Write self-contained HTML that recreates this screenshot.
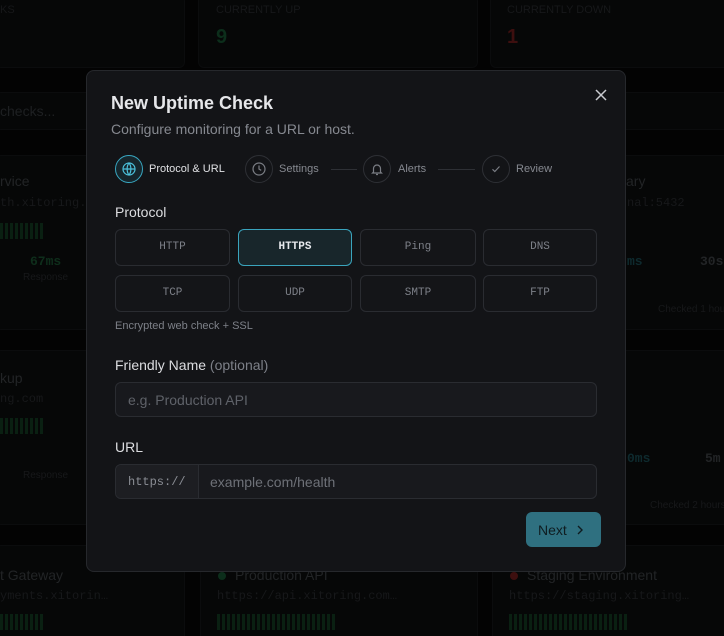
<!DOCTYPE html>
<html><head><style>
*{box-sizing:border-box;margin:0;padding:0}
html,body{width:724px;height:636px;overflow:hidden}
body{background:#030303;font-family:"Liberation Sans",sans-serif;position:relative}
.bg{position:absolute;background:#060707;border:1px solid #0b0c0d;border-radius:6px}
.t{position:absolute;white-space:nowrap}
.m{font-family:"Liberation Mono",monospace}
.bars{position:absolute;height:16px;background:repeating-linear-gradient(90deg,#0a2012 0 3px,transparent 3px 5px)}
.modal{position:absolute;left:86px;top:70px;width:540px;height:502px;background:#131417;border:1px solid #26282c;border-radius:8px}
.step{position:absolute;top:155px;width:28px;height:28px;border:1px solid #2e3035;border-radius:50%}
.step svg{position:absolute;left:5px;top:5px}
.lbl{position:absolute;top:163px;font-size:11px;color:#868990}
.line{position:absolute;top:169px;height:1px;background:#2e3035}
.pb{position:absolute;height:37px;border:1px solid #2a2c31;border-radius:6px;background:#141518;color:#7d8088;font-family:"Liberation Mono",monospace;font-size:11px;text-align:center;line-height:35px}
.in{position:absolute;left:115px;width:482px;height:35px;border:1px solid #2a2c31;border-radius:6px;background:#18191d}
</style></head><body>
<div class="bg" style="left:-5px;top:-5px;width:190px;height:73px"></div>
<div class="bg" style="left:198px;top:-5px;width:280px;height:73px"></div>
<div class="bg" style="left:490px;top:-5px;width:240px;height:73px"></div>
<div class="t" style="left:0;top:4px;font-size:11px;color:#17181a">KS</div>
<div class="t" style="left:216px;top:4px;font-size:11px;color:#17181a">CURRENTLY UP</div>
<div class="t" style="left:216px;top:26px;font-size:20px;color:#0c2e1b;font-weight:bold">9</div>
<div class="t" style="left:507px;top:4px;font-size:11px;color:#17181a">CURRENTLY DOWN</div>
<div class="t" style="left:507px;top:26px;font-size:20px;color:#3d0f0f;font-weight:bold">1</div>
<div class="bg" style="left:-5px;top:92px;width:740px;height:38px"></div>
<div class="t" style="left:0;top:103px;font-size:14px;color:#1e2022">checks...</div>
<div class="bg" style="left:-5px;top:155px;width:190px;height:175px"></div>
<div class="bg" style="left:620px;top:155px;width:110px;height:175px"></div>
<div class="t" style="left:0;top:173px;font-size:14px;color:#222426">rvice</div>
<div class="t m" style="left:0;top:196px;font-size:12px;color:#17181a">th.xitoring.c</div>
<div class="bars" style="left:0;top:223px;width:43px"></div>
<div class="t m" style="left:30px;top:254px;font-size:13px;color:#0e2e1b;font-weight:bold">67ms</div>
<div class="t" style="left:23px;top:272px;font-size:10px;color:#17181a">Response</div>
<div class="t" style="left:626px;top:173px;font-size:14px;color:#222426">ary</div>
<div class="t m" style="left:627px;top:196px;font-size:12px;color:#17181a">nal:5432</div>
<div class="t m" style="left:627px;top:254px;font-size:13px;color:#0e2a2e;font-weight:bold">ms</div>
<div class="t m" style="left:700px;top:254px;font-size:13px;color:#222426;font-weight:bold">30s</div>
<div class="t" style="left:658px;top:304px;font-size:10px;color:#17181a">Checked 1 hour</div>
<div class="bg" style="left:-5px;top:350px;width:190px;height:175px"></div>
<div class="bg" style="left:620px;top:350px;width:110px;height:175px"></div>
<div class="t" style="left:0;top:370px;font-size:14px;color:#222426">kup</div>
<div class="t m" style="left:0;top:392px;font-size:12px;color:#17181a">ng.com</div>
<div class="bars" style="left:0;top:418px;width:43px"></div>
<div class="t" style="left:23px;top:470px;font-size:10px;color:#17181a">Response</div>
<div class="t m" style="left:627px;top:451px;font-size:13px;color:#0e2a2e;font-weight:bold">0ms</div>
<div class="t m" style="left:705px;top:451px;font-size:13px;color:#222426;font-weight:bold">5m</div>
<div class="t" style="left:650px;top:500px;font-size:10px;color:#17181a">Checked 2 hours</div>
<div class="bg" style="left:-5px;top:545px;width:190px;height:100px"></div>
<div class="bg" style="left:200px;top:545px;width:278px;height:100px"></div>
<div class="bg" style="left:492px;top:545px;width:240px;height:100px"></div>
<div class="t" style="left:0;top:567px;font-size:14px;color:#222426">t Gateway</div>
<div class="t m" style="left:0;top:589px;font-size:12px;color:#17181a">yments.xitorin…</div>
<div class="bars" style="left:0;top:614px;width:43px"></div>
<div style="position:absolute;left:218px;top:572px;width:8px;height:8px;border-radius:50%;background:#0c2e1b"></div>
<div class="t" style="left:235px;top:567px;font-size:14px;color:#222426">Production API</div>
<div class="t m" style="left:217px;top:589px;font-size:12px;color:#17181a">https://api.xitoring.com…</div>
<div class="bars" style="left:217px;top:614px;width:118px"></div>
<div style="position:absolute;left:510px;top:572px;width:8px;height:8px;border-radius:50%;background:#3d0f0f"></div>
<div class="t" style="left:527px;top:567px;font-size:14px;color:#222426">Staging Environment</div>
<div class="t m" style="left:509px;top:589px;font-size:12px;color:#17181a">https://staging.xitoring…</div>
<div class="bars" style="left:509px;top:614px;width:118px"></div>

<div class="modal"></div>
<div class="t" style="left:111px;top:93px;font-size:18px;font-weight:bold;color:#e6e7ea">New Uptime Check</div>
<div class="t" style="left:111px;top:121px;font-size:14px;color:#868990">Configure monitoring for a URL or host.</div>
<svg style="position:absolute;left:594px;top:88px" width="14" height="14" viewBox="0 0 14 14"><path d="M2 2L12 12M12 2L2 12" stroke="#c9cbd0" stroke-width="1.5"/></svg>

<div class="step" style="left:115px;border-color:#38a6c0;background:#16262c"><svg width="16" height="16" viewBox="0 0 16 16" fill="none" stroke="#4cc0da" stroke-width="1.2"><circle cx="8" cy="8" r="6"/><path d="M2 8h12M8 2c-2.5 3-2.5 9 0 12M8 2c2.5 3 2.5 9 0 12"/></svg></div>
<div class="lbl" style="left:149px;color:#e0e1e4">Protocol &amp; URL</div>
<div class="step" style="left:245px"><svg width="16" height="16" viewBox="0 0 16 16" fill="none" stroke="#7a7d84" stroke-width="1.2"><circle cx="8" cy="8" r="6"/><path d="M8 4.5V8l2.2 1.4"/></svg></div>
<div class="lbl" style="left:279px">Settings</div>
<div class="line" style="left:331px;width:26px"></div>
<div class="step" style="left:363px"><svg width="16" height="16" viewBox="0 0 16 16" fill="none" stroke="#7a7d84" stroke-width="1.2"><path d="M4.5 11V7.5a3.5 3.5 0 0 1 7 0V11l1 1h-9zM7 13.5h2"/></svg></div>
<div class="lbl" style="left:398px">Alerts</div>
<div class="line" style="left:438px;width:37px"></div>
<div class="step" style="left:482px"><svg width="16" height="16" viewBox="0 0 16 16" fill="none" stroke="#7a7d84" stroke-width="1.2"><path d="M4.5 8.3l2.3 2.2 4.7-5"/></svg></div>
<div class="lbl" style="left:516px">Review</div>

<div class="t" style="left:115px;top:204px;font-size:14px;color:#dcdde0">Protocol</div>
<div class="pb" style="left:115px;top:229px;width:115px">HTTP</div>
<div class="pb" style="left:238px;top:229px;width:114px;border-color:#3aa4bd;background:#18262b;color:#e8eaee;font-weight:bold">HTTPS</div>
<div class="pb" style="left:360px;top:229px;width:116px">Ping</div>
<div class="pb" style="left:483px;top:229px;width:114px">DNS</div>
<div class="pb" style="left:115px;top:275px;width:115px">TCP</div>
<div class="pb" style="left:238px;top:275px;width:114px">UDP</div>
<div class="pb" style="left:360px;top:275px;width:116px">SMTP</div>
<div class="pb" style="left:483px;top:275px;width:114px">FTP</div>
<div class="t" style="left:115px;top:320px;font-size:11px;color:#7d8088">Encrypted web check + SSL</div>

<div class="t" style="left:115px;top:357px;font-size:14px;color:#dcdde0">Friendly Name <span style="color:#7d8088">(optional)</span></div>
<div class="in" style="top:382px"></div>
<div class="t" style="left:128px;top:392px;font-size:14px;color:#5f6269">e.g. Production API</div>

<div class="t" style="left:115px;top:439px;font-size:14px;color:#dcdde0">URL</div>
<div class="in" style="top:464px"></div>
<div style="position:absolute;left:116px;top:465px;width:83px;height:33px;background:#1d1e22;border-right:1px solid #2a2c31;border-radius:5px 0 0 5px"></div>
<div class="t m" style="left:128px;top:475px;font-size:12px;color:#8a8d94">https://</div>
<div class="t" style="left:210px;top:474px;font-size:14px;color:#6e7178">example.com/health</div>

<div style="position:absolute;left:526px;top:512px;width:75px;height:35px;background:#2f7080;border-radius:6px"></div>
<div class="t" style="left:538px;top:522px;font-size:14px;color:#0f1c20">Next</div>
<svg style="position:absolute;left:575px;top:524px" width="10" height="12" viewBox="0 0 10 12"><path d="M3 2l4 4-4 4" fill="none" stroke="#0f1c20" stroke-width="1.4"/></svg>
</body></html>
